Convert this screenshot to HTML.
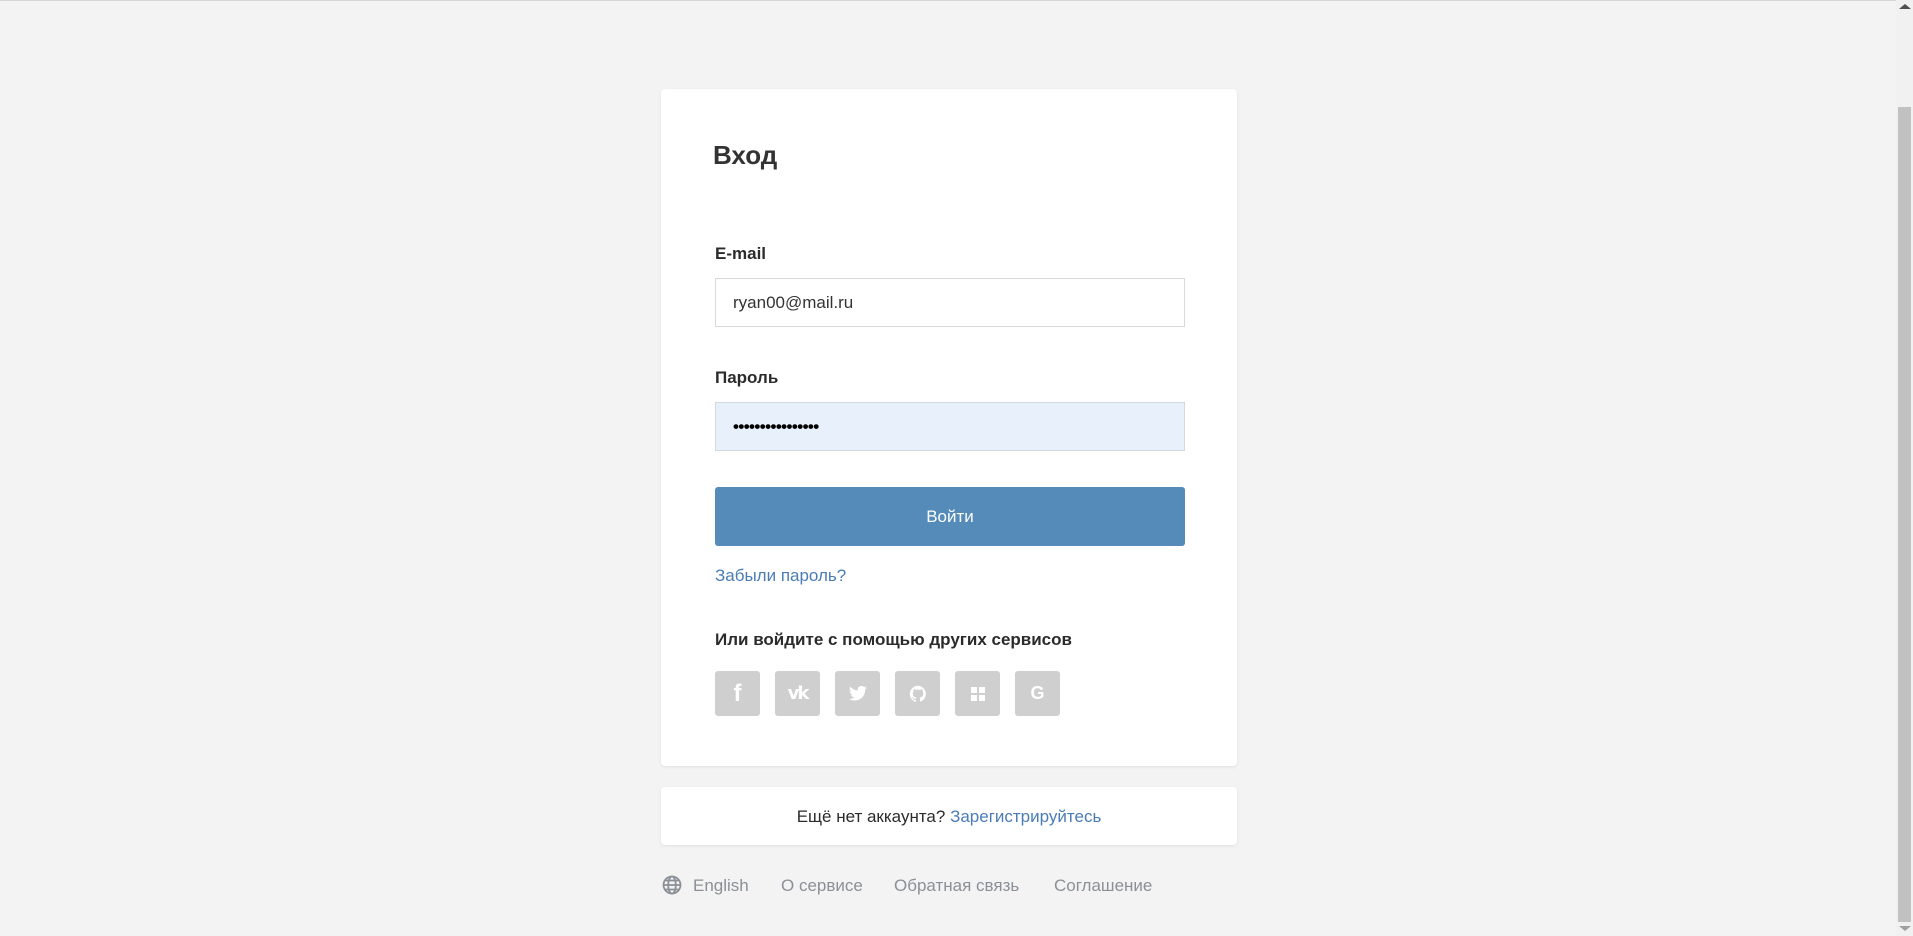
<!DOCTYPE html>
<html><head><meta charset="utf-8"><style>
*{margin:0;padding:0;box-sizing:border-box}
html,body{width:1913px;height:936px;overflow:hidden;background:#f3f3f3;font-family:"Liberation Sans",Arial,sans-serif;color:#2b2b2b}
.topline{position:absolute;left:0;top:0;width:1896px;height:1px;background:#d6d6d6}
.sb{position:absolute;left:1896px;top:0;width:17px;height:936px;background:#f1f1f1}
.thumb{position:absolute;left:1898px;top:107px;width:13px;height:815px;background:#c1c1c1}
.card{position:absolute;left:661px;width:576px;background:#fff;border-radius:4px;box-shadow:0 1px 3px rgba(0,0,0,.08)}
.abs{position:absolute;white-space:nowrap}
h1{position:absolute;left:52px;top:51px;font-size:26px;font-weight:bold;color:#333}
.lbl{font-size:17px;font-weight:bold;color:#2b2b2b}
.inp{position:absolute;left:54px;width:470px;height:49px;border:1px solid #d9d9d9;font-size:17px;padding-left:17px;line-height:47px;color:#333}
.btn{position:absolute;left:54px;top:398px;width:470px;height:59px;background:#548bb8;border-radius:3px;color:#fff;font-size:17px;text-align:center;line-height:59px}
.ic{position:absolute;top:582px;width:45px;height:45px;background:#cfcfcf;border-radius:3px;display:flex;align-items:center;justify-content:center;color:#fff;font-weight:bold}
.foot{position:absolute;top:876px;font-size:17px;color:#8b9097;white-space:nowrap}
</style></head><body>
<div class="topline"></div>
<div class="sb"></div><div class="thumb"></div>
<div class="abs" style="top:4px;width:0;height:0;border-left:6px solid transparent;border-right:6px solid transparent;border-bottom:5px solid #505050;left:1899px"></div>
<div class="abs" style="left:1899px;top:926px;width:0;height:0;border-left:6px solid transparent;border-right:6px solid transparent;border-top:5px solid #a0a0a0"></div>

<div class="card" style="top:89px;height:677px">
  <h1>Вход</h1>
  <div class="abs lbl" style="left:54px;top:155px">E-mail</div>
  <div class="inp" style="top:189px">ryan00@mail.ru</div>
  <div class="abs lbl" style="left:54px;top:279px">Пароль</div>
  <div class="inp" style="top:313px;background:#e8f0fb;border-color:#d2d8e0;color:#000;font-size:17px;letter-spacing:-0.6px;font-weight:bold">••••••••••••••••</div>
  <div class="btn">Войти</div>
  <div class="abs" style="left:54px;top:477px;font-size:17px;color:#4a7db5">Забыли пароль?</div>
  <div class="abs lbl" style="left:54px;top:541px">Или войдите с помощью других сервисов</div>
  <div class="ic" style="left:54px;font-size:24px">f</div>
  <div class="ic" style="left:114px;font-size:18px;letter-spacing:-2px;font-family:'DejaVu Sans'">vk</div>
  <div class="ic" style="left:174px"><svg width="18" height="15" viewBox="0 0 24 20"><path fill="#fff" d="M24 2.4a10 10 0 0 1-2.8.8A5 5 0 0 0 23.3.4a10 10 0 0 1-3.1 1.2A4.9 4.9 0 0 0 11.8 6 14 14 0 0 1 1.7.9a4.9 4.9 0 0 0 1.5 6.6A5 5 0 0 1 1 6.9a4.9 4.9 0 0 0 3.9 4.8 5 5 0 0 1-2.2.1 4.9 4.9 0 0 0 4.6 3.4A9.9 9.9 0 0 1 0 17.2 14 14 0 0 0 7.5 19.4c9.1 0 14-7.5 14-14v-.6A10 10 0 0 0 24 2.4z"/></svg></div>
  <div class="ic" style="left:234px"><svg width="18" height="18" viewBox="0 0 24 24"><path fill="#fff" d="M12 1a11 11 0 0 0-3.5 21.4c.6.1.8-.2.8-.5v-2c-3.1.7-3.700-1.4-3.7-1.4-.5-1.3-1.2-1.6-1.2-1.6-1-.7.1-.7.1-.7 1.1.1 1.7 1.1 1.7 1.1 1 1.7 2.6 1.2 3.2.9.1-.7.4-1.2.7-1.5-2.4-.3-5-1.2-5-5.4 0-1.2.4-2.200 1.1-2.9-.1-.3-.5-1.4.1-2.9 0 0 .9-.3 3 1.1a10 10 0 0 1 5.5 0c2.1-1.4 3-1.1 3-1.1.6 1.5.2 2.6.1 2.9.7.8 1.1 1.7 1.1 2.9 0 4.2-2.6 5.1-5 5.4.4.3.7 1 .7 2v3c0 .3.2.6.8.5A11 11 0 0 0 12 1z"/></svg></div>
  <div class="ic" style="left:294px"><svg width="14" height="14" viewBox="0 0 14 14"><rect x="0" y="0" width="6" height="6" fill="#fff"/><rect x="0" y="8" width="6" height="6" fill="#fff"/><rect x="8" y="8" width="6" height="6" fill="#fff"/><rect x="8" y="0" width="6" height="6" fill="#fff"/></svg></div>
  <div class="ic" style="left:354px;font-size:18px">G</div>
</div>

<div class="card" style="top:787px;height:58px">
  <div class="abs" style="left:0;width:576px;text-align:center;top:20px;font-size:17px;color:#2b2b2b">Ещё нет аккаунта? <span style="color:#4a7db5">Зарегистрируйтесь</span></div>
</div>

<svg class="abs" style="left:662px;top:875px" width="20" height="20" viewBox="0 0 20 20" fill="none" stroke="#8b9097" stroke-width="1.8"><circle cx="10" cy="10" r="8.5"/><ellipse cx="10" cy="10" rx="3.8" ry="8.5"/><path d="M1.5 10h17M3 5.5h14M3 14.5h14"/></svg>
<div class="foot" style="left:693px">English</div>
<div class="foot" style="left:781px">О сервисе</div>
<div class="foot" style="left:894px">Обратная связь</div>
<div class="foot" style="left:1054px">Соглашение</div>
</body></html>
